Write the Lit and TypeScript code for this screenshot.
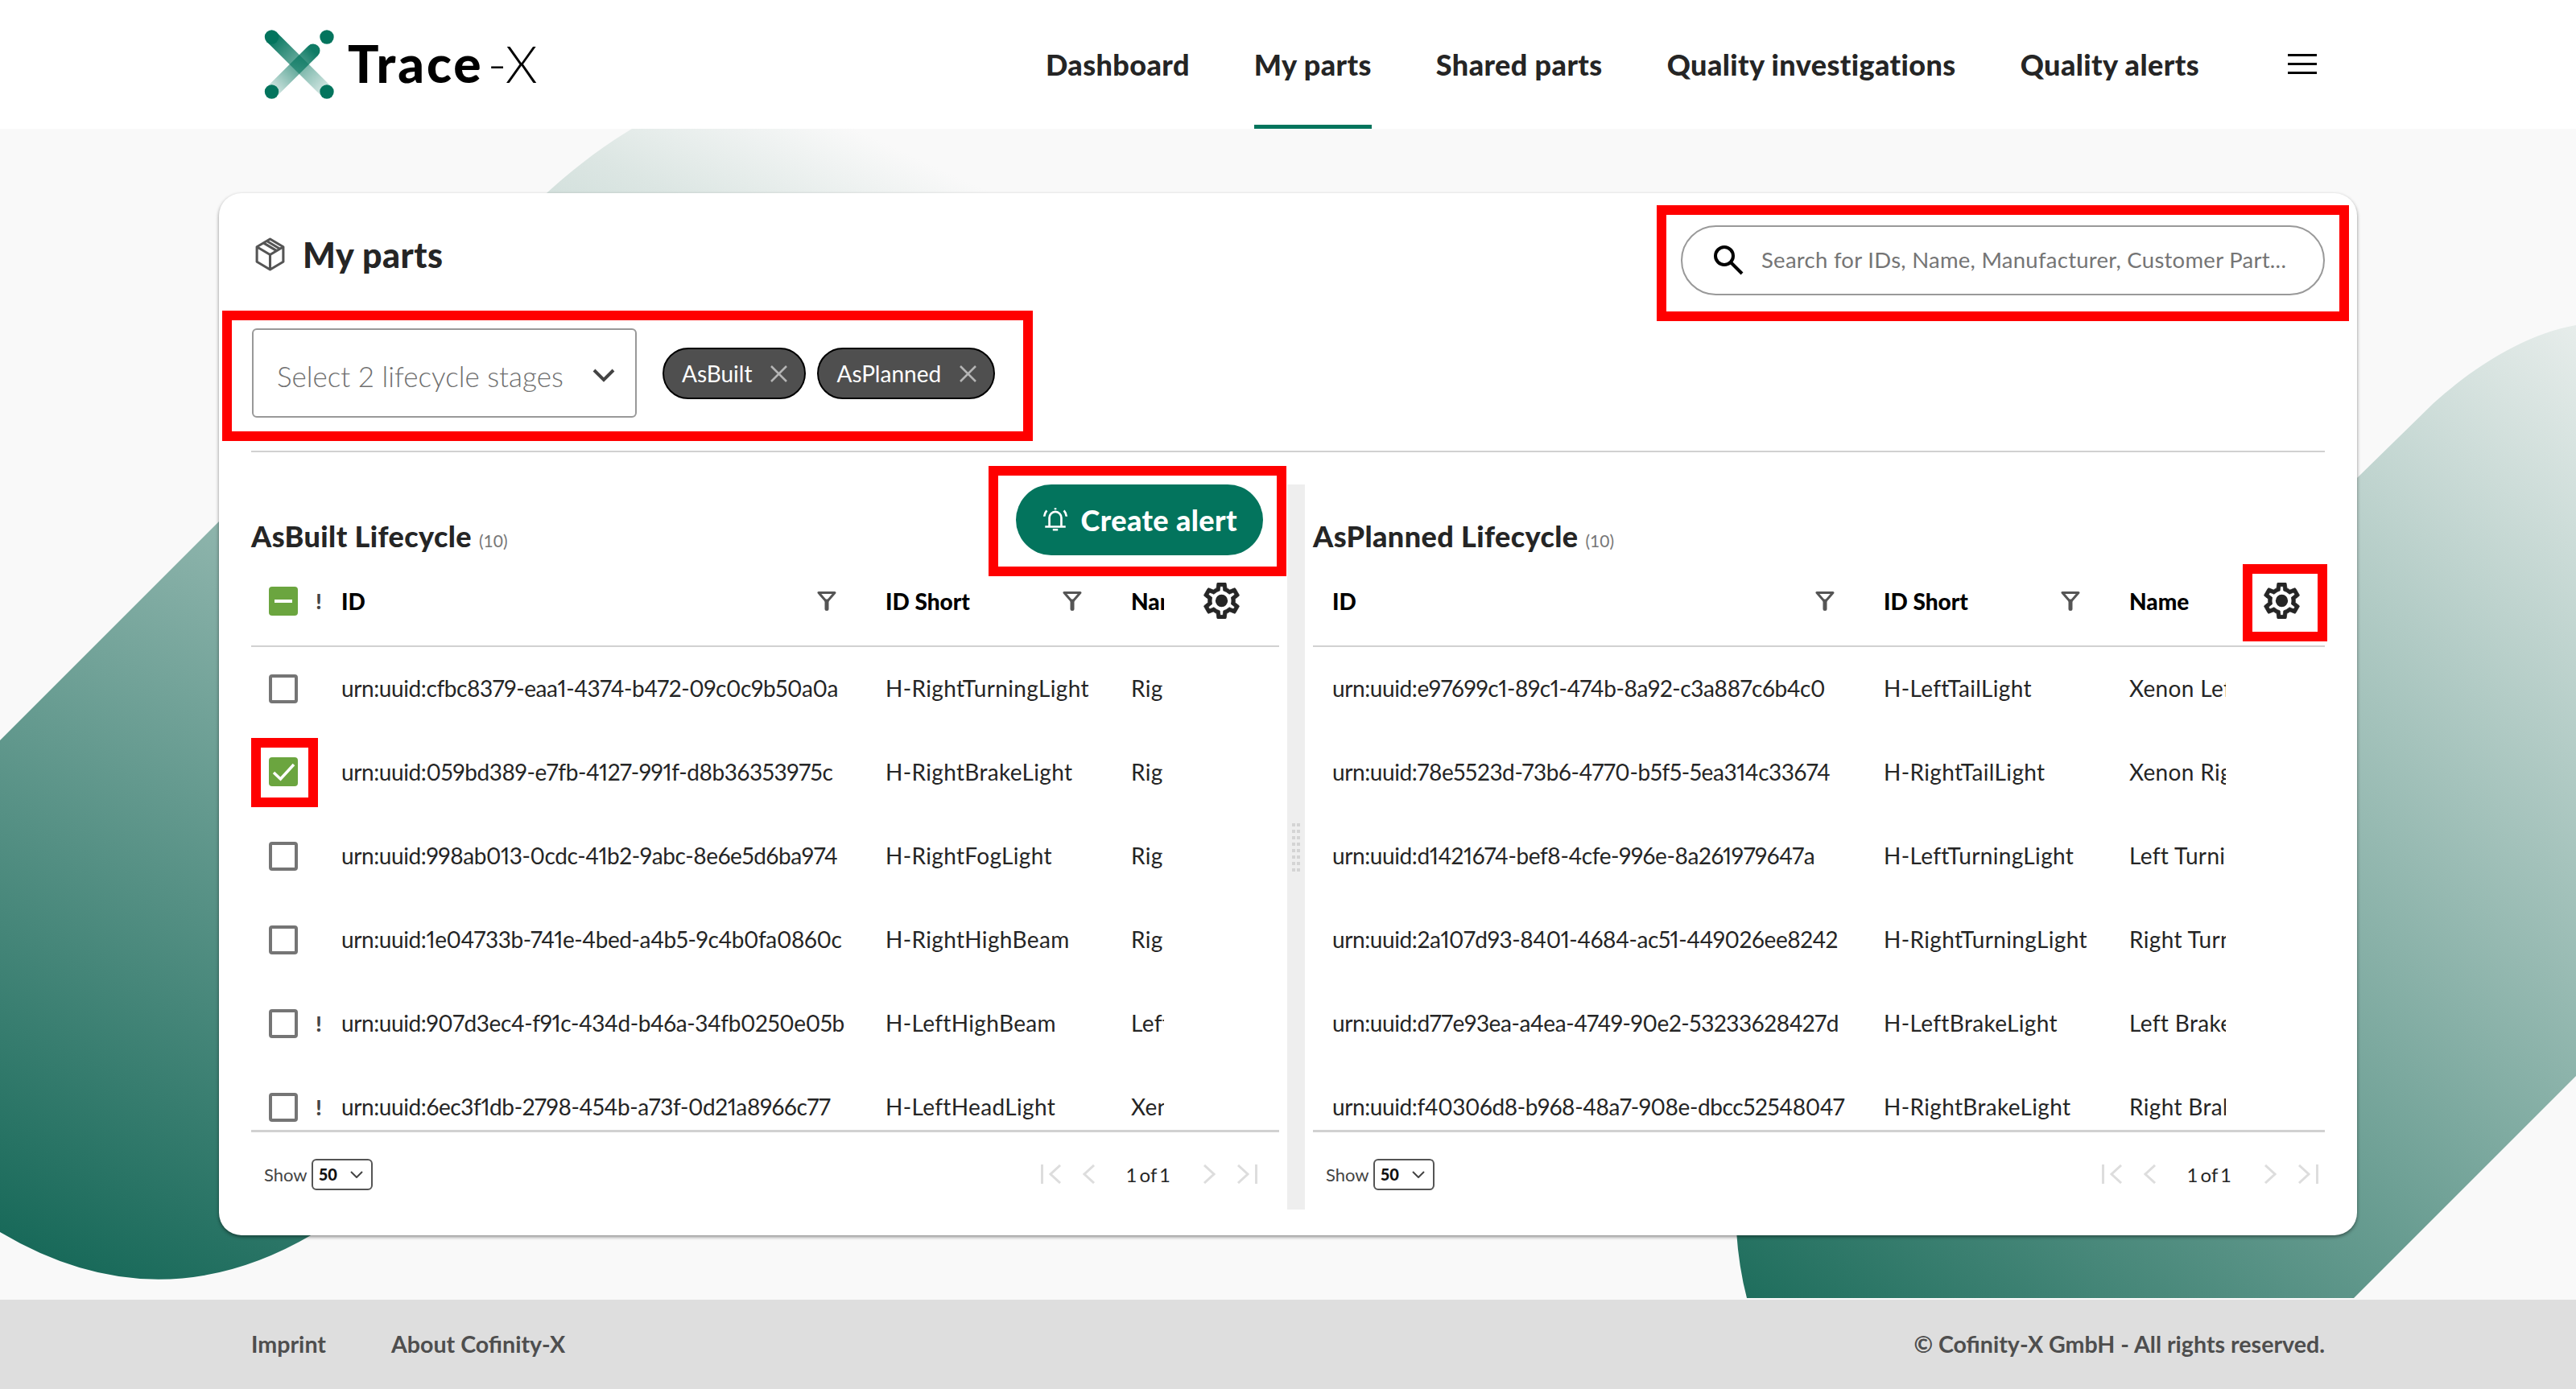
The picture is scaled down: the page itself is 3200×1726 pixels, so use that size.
import { LitElement, css, html, svg } from "lit";
import { customElement } from "lit/decorators.js";

interface Part {
  id: string;
  short: string;
  name: string;
  flag?: boolean;
  checked?: boolean;
}

const asBuilt: Part[] = [
  { id: "urn:uuid:cfbc8379-eaa1-4374-b472-09c0c9b50a0a", short: "H-RightTurningLight", name: "Right Turning Light" },
  { id: "urn:uuid:059bd389-e7fb-4127-991f-d8b36353975c", short: "H-RightBrakeLight", name: "Right Brake Light", checked: true },
  { id: "urn:uuid:998ab013-0cdc-41b2-9abc-8e6e5d6ba974", short: "H-RightFogLight", name: "Right Fog Light" },
  { id: "urn:uuid:1e04733b-741e-4bed-a4b5-9c4b0fa0860c", short: "H-RightHighBeam", name: "Right High Beam" },
  { id: "urn:uuid:907d3ec4-f91c-434d-b46a-34fb0250e05b", short: "H-LeftHighBeam", name: "Left High Beam", flag: true },
  { id: "urn:uuid:6ec3f1db-2798-454b-a73f-0d21a8966c77", short: "H-LeftHeadLight", name: "Xenon Left Head", flag: true },
];

const asPlanned: Part[] = [
  { id: "urn:uuid:e97699c1-89c1-474b-8a92-c3a887c6b4c0", short: "H-LeftTailLight", name: "Xenon Left Tail Light" },
  { id: "urn:uuid:78e5523d-73b6-4770-b5f5-5ea314c33674", short: "H-RightTailLight", name: "Xenon Right Tail Light" },
  { id: "urn:uuid:d1421674-bef8-4cfe-996e-8a261979647a", short: "H-LeftTurningLight", name: "Left Turning Light" },
  { id: "urn:uuid:2a107d93-8401-4684-ac51-449026ee8242", short: "H-RightTurningLight", name: "Right Turning Light" },
  { id: "urn:uuid:d77e93ea-a4ea-4749-90e2-53233628427d", short: "H-LeftBrakeLight", name: "Left Brake Light" },
  { id: "urn:uuid:f40306d8-b968-48a7-908e-dbcc52548047", short: "H-RightBrakeLight", name: "Right Brake Light" },
];

const navItems = ["Dashboard", "My parts", "Shared parts", "Quality investigations", "Quality alerts"];

const gearPath =
  "M19.43 12.98c.04-.32.07-.64.07-.98 0-.34-.03-.66-.07-.98l2.11-1.65c.19-.15.24-.42.12-.64l-2-3.46c-.09-.16-.26-.25-.44-.25-.06 0-.12.01-.17.03l-2.49 1c-.52-.4-1.08-.73-1.69-.98l-.38-2.65C14.46 2.18 14.25 2 14 2h-4c-.25 0-.46.18-.49.42l-.38 2.65c-.61.25-1.17.59-1.69.98l-2.49-1c-.06-.02-.12-.03-.18-.03-.17 0-.34.09-.43.25l-2 3.46c-.13.22-.07.49.12.64l2.11 1.65c-.04.32-.07.65-.07.98 0 .33.03.66.07.98l-2.11 1.65c-.19.15-.24.42-.12.64l2 3.46c.09.16.26.25.44.25.06 0 .12-.01.17-.03l2.49-1c.52.4 1.08.73 1.69.98l.38 2.65c.03.24.24.42.49.42h4c.25 0 .46-.18.49-.42l.38-2.65c.61-.25 1.17-.59 1.69-.98l2.49 1c.06.02.12.03.18.03.17 0 .34-.09.43-.25l2-3.46c.12-.22.07-.49-.12-.64l-2.11-1.65zm-1.98-1.71c.04.31.05.52.05.73 0 .21-.02.43-.05.73l-.14 1.13.89.7 1.08.84-.7 1.21-1.27-.51-1.04-.42-.9.68c-.43.32-.84.56-1.25.73l-1.06.43-.16 1.13-.2 1.35h-1.4l-.19-1.35-.16-1.13-1.06-.43c-.43-.18-.83-.41-1.23-.71l-.91-.7-1.06.43-1.27.51-.7-1.21 1.08-.84.89-.7-.14-1.13c-.03-.31-.05-.54-.05-.74s.02-.43.05-.73l.14-1.13-.89-.7-1.08-.84.7-1.21 1.27.51 1.04.42.9-.68c.43-.32.84-.56 1.25-.73l1.06-.43.16-1.13.2-1.35h1.39l.19 1.35.16 1.13 1.06.43c.43.18.83.41 1.23.71l.91.7 1.06-.43 1.27-.51.7 1.21-1.07.85-.89.7.14 1.13z";

@customElement("app-root")
export class AppRoot extends LitElement {
  static styles = css`
    :host {
      display: flex;
      flex-direction: column;
      position: relative;
      width: 3200px;
      height: 1726px;
      overflow: hidden;
      background: #f9f9f9;
      font-family: Lato, "Noto Sans", sans-serif;
      color: #252525;
    }
    * {
      box-sizing: border-box;
    }
    svg {
      display: block;
      flex: none;
    }
    .backdrop {
      position: absolute;
      left: 0;
      top: 0;
    }
    header {
      position: relative;
      display: flex;
      align-items: stretch;
      height: 160px;
      padding-left: 328px;
      background: #fff;
    }
    .logo {
      display: flex;
      align-items: center;
      gap: 16px;
    }
    .brand {
      font-size: 64px;
      font-weight: 900;
      color: #000;
      letter-spacing: 3px;
      line-height: 1;
      margin-top: -2px;
    }
    .brand span {
      font-weight: 300;
      letter-spacing: 0;
      margin-left: 5px;
    }
    nav {
      display: flex;
      align-items: stretch;
      gap: 80px;
      margin-left: auto;
    }
    nav a {
      display: flex;
      align-items: center;
      font-size: 36px;
      font-weight: 900;
      letter-spacing: 0.4px;
      color: #252525;
      border-bottom: 5px solid transparent;
      border-top: 5px solid transparent;
    }
    nav a.active {
      border-bottom-color: #03745d;
    }
    .burger {
      align-self: center;
      display: flex;
      flex-direction: column;
      gap: 8px;
      margin: 0 322px 2px 110px;
      width: 36px;
    }
    .burger i {
      display: block;
      height: 3px;
      background: #000;
    }
    main {
      position: relative;
      flex: 1;
      padding: 80px 272px 0;
    }
    .card {
      height: 1295px;
      padding: 0 40px;
      background: #fff;
      border-radius: 28px;
      box-shadow: 0 2px 4px rgba(0, 0, 0, 0.45);
    }
    .top {
      display: flex;
      justify-content: space-between;
      height: 322px;
      border-bottom: 2px solid #d1d1d1;
    }
    .title {
      display: flex;
      align-items: center;
      gap: 21px;
      height: 48px;
      margin: 52px 0 46px 4px;
      font-size: 43px;
      font-weight: 900;
      letter-spacing: 0.5px;
      color: #252525;
    }
    .mark {
      border: 12px solid #f00;
    }
    .lifecycle-mark {
      display: flex;
      align-items: flex-start;
      gap: 32px;
      width: 1007px;
      height: 162px;
      margin-left: -36px;
      padding: 10px 0 0 25px;
    }
    .select {
      display: flex;
      align-items: center;
      justify-content: space-between;
      width: 478px;
      height: 111px;
      padding: 6px 25px 0 29px;
      border: 2px solid #999;
      border-radius: 6px;
      font-size: 35px;
      font-weight: 300;
      color: #707070;
    }
    .chips {
      display: flex;
      gap: 14px;
      margin-top: 24px;
    }
    .chip {
      display: flex;
      align-items: center;
      gap: 22px;
      height: 64px;
      padding: 0 20px 0 22px;
      border: 2px solid #000;
      border-radius: 32px;
      background: #4f4f4f;
      color: #fff;
      font-size: 28px;
    }
    .search-mark {
      width: 860px;
      height: 144px;
      margin: 15px -30px 0 0;
      padding: 13px 18px;
    }
    .search {
      display: flex;
      align-items: center;
      gap: 22px;
      height: 87px;
      padding: 0 38px 2px;
      border: 2px solid #999;
      border-radius: 44px;
      font-size: 27.5px;
      font-weight: 400;
      letter-spacing: 0.27px;
      color: #757575;
      white-space: nowrap;
    }
    .panels {
      display: flex;
      height: 901px;
      margin-top: 40px;
    }
    .panel {
      display: flex;
      flex-direction: column;
    }
    .panel.left {
      width: 1287px;
      padding-right: 10px;
    }
    .panel.right {
      flex: 1;
      padding-left: 10px;
    }
    .splitter {
      display: flex;
      align-items: center;
      justify-content: center;
      width: 22px;
      background: #eee;
    }
    .grip {
      display: grid;
      grid-template-columns: 4px 4px;
      gap: 4px 2px;
    }
    .grip i {
      width: 4px;
      height: 4px;
      background: #d4d4d4;
    }
    .panel-head {
      display: flex;
      justify-content: space-between;
      height: 98px;
      flex: none;
    }
    .panel-title {
      margin-top: 40px;
      font-size: 36px;
      line-height: 48px;
      font-weight: 900;
      letter-spacing: 0.4px;
      color: #252525;
    }
    .panel-title small {
      font-size: 21px;
      font-weight: 400;
      letter-spacing: 0;
      color: #777;
    }
    .create-mark {
      flex: none;
      height: 137px;
      margin: -23px -9px 0 0;
      padding: 11px 17px 14px 22px;
    }
    .create {
      display: flex;
      align-items: center;
      gap: 15px;
      height: 88px;
      padding: 0 32px;
      border: 0;
      border-radius: 44px;
      background: #03745d;
      color: #fff;
      font: 900 36px Lato, sans-serif;
      letter-spacing: 0.4px;
    }
    .grid {
      display: grid;
      align-items: center;
      font-size: 28px;
    }
    .left .grid {
      grid-template-columns: 80px 32px 676px 305px 41px 143px;
    }
    .right .grid {
      grid-template-columns: 24px 685px 305px 120px 123px;
    }
    .thead {
      height: 104px;
      grid-template-rows: 93px;
      border-bottom: 2px solid #d1d1d1;
      font-weight: 900;
      color: #000;
      flex: none;
    }
    .th {
      display: flex;
      align-items: center;
      justify-content: space-between;
      padding-right: 61px;
      white-space: nowrap;
    }
    .clip {
      overflow: hidden;
      white-space: nowrap;
      padding: 0;
    }
    .gear-cell {
      align-self: start;
      display: flex;
      justify-content: center;
      padding-top: 24px;
    }
    .right .gear-cell {
      justify-content: flex-start;
      padding-top: 0;
    }
    .gear-mark {
      flex: none;
      height: 96px;
      width: 105px;
      margin: 1px 0 0 21px;
      padding: 11px 22px 16px 14px;
    }
    .tbody {
      height: 600px;
      overflow: hidden;
      flex: none;
    }
    .row {
      height: 104px;
    }
    .cell {
      overflow: hidden;
      white-space: nowrap;
      padding-bottom: 3px;
      letter-spacing: 0.35px;
    }
    .cell.uuid {
      letter-spacing: -0.4px;
      font-variant-numeric: proportional-nums;
      font-feature-settings: "pnum";
    }
    .check {
      display: flex;
      align-items: center;
      justify-content: center;
      width: 36px;
      height: 36px;
      margin-left: 22px;
      border: 4px solid #757575;
      border-radius: 4px;
    }
    .check.on {
      border: 0;
      background: #6ba53f;
    }
    .check-mark {
      width: 83px;
      height: 86px;
      padding: 12px 0 0 10px;
    }
    .check-mark .check {
      margin-left: 0;
    }
    .flag {
      display: flex;
      justify-content: center;
      font-weight: 900;
      font-size: 26px;
      color: #444;
      width: 8px;
    }
    .pager-row {
      display: flex;
      align-items: center;
      justify-content: space-between;
      flex: 1;
      padding: 8px 8px 0 16px;
      border-top: 3px solid #d1d1d1;
    }
    .left .pager-row {
      padding-right: 27px;
    }
    .show {
      display: flex;
      align-items: center;
      gap: 5px;
      font-size: 22px;
      color: #444;
    }
    .size {
      display: flex;
      align-items: center;
      justify-content: space-between;
      width: 76px;
      height: 39px;
      padding: 0 10px 0 7px;
      border: 2px solid #555;
      border-radius: 6px;
      font-size: 20px;
      font-weight: 900;
      color: #111;
    }
    .pager {
      display: flex;
      align-items: center;
      font-size: 24px;
      color: #252525;
    }
    .count {
      margin: 0 40px 0 38px;
      word-spacing: -3px;
    }
    .pager svg + svg {
      margin-left: 26px;
    }
    footer {
      position: relative;
      display: flex;
      align-items: center;
      gap: 81px;
      height: 111px;
      padding: 0 312px 2px;
      background: #dedede;
      font-size: 28.6px;
      font-weight: 700;
      color: #4e4e4e;
    }
    footer .copy {
      margin-left: auto;
    }
  `;

  private backdrop() {
    return html`
      <svg class="backdrop" width="3200" height="1726" viewBox="0 0 3200 1726">
        <defs>
          <linearGradient id="bgl" gradientUnits="userSpaceOnUse" x1="0" y1="1530" x2="715" y2="-2">
            <stop offset="0" stop-color="#196a5a" />
            <stop offset="0.9" stop-color="#dce6e3" />
            <stop offset="1" stop-color="#f9f9f9" />
          </linearGradient>
          <linearGradient id="bgr" gradientUnits="userSpaceOnUse" x1="2170" y1="1613" x2="3200" y2="400">
            <stop offset="0" stop-color="#1f6e5d" />
            <stop offset="1" stop-color="#e7edeb" />
          </linearGradient>
        </defs>
        <path fill="url(#bgl)" d="M0 920L600 320C650 265 710 205 785 160L1300 160L1300 1000L388 1534Q195 1647 0 1531Z" />
        <path fill="url(#bgr)" d="M2500 1000L2929 593L3023 501C3080 450 3140 415 3200 404L3200 1337L2924 1613L2170 1613Q2160 1575 2157 1530Z" />
      </svg>
    `;
  }

  private logoMark() {
    return html`
      <svg width="88" height="86" viewBox="0 0 88 86">
        <defs>
          <linearGradient id="a1" gradientUnits="userSpaceOnUse" x1="9" y1="9" x2="78" y2="77">
            <stop offset="0" stop-color="#03745d" />
            <stop offset="1" stop-color="#03745d" stop-opacity="0.15" />
          </linearGradient>
          <linearGradient id="a2" gradientUnits="userSpaceOnUse" x1="61" y1="26" x2="9" y2="77">
            <stop offset="0" stop-color="#03745d" stop-opacity="0.95" />
            <stop offset="1" stop-color="#03745d" stop-opacity="0.15" />
          </linearGradient>
        </defs>
        <path d="M9.5 9L78 77" stroke="url(#a1)" stroke-width="17" />
        <path d="M9.5 77L61 26" stroke="url(#a2)" stroke-width="17" stroke-linecap="round" />
        <circle cx="9.5" cy="9" r="8.7" fill="#03745d" />
        <circle cx="78" cy="9" r="8.7" fill="#03745d" />
        <circle cx="9.5" cy="77" r="8.7" fill="#03745d" />
        <circle cx="78" cy="77" r="8.7" fill="#03745d" />
      </svg>
    `;
  }

  private filterIcon() {
    return html`
      <svg width="24" height="25" viewBox="0 0 24 25">
        <path d="M2 2.5h20L12 14z" fill="none" stroke="#555" stroke-width="3" stroke-linejoin="round" />
        <path d="M12 13V22.5" stroke="#555" stroke-width="5" stroke-linecap="round" />
      </svg>
    `;
  }

  private gearIcon() {
    return html`
      <svg width="45" height="45" viewBox="2 2 20 20">
        <path d=${gearPath} fill="#252525" stroke="#252525" stroke-width="0.35" />
        <circle cx="12" cy="12" r="3.4" fill="#252525" />
      </svg>
    `;
  }

  private closeIcon() {
    return html`
      <svg width="23" height="23" viewBox="0 0 23 23">
        <path d="M2 2L21 21M21 2L2 21" stroke="#b5b5b5" stroke-width="2.5" />
      </svg>
    `;
  }

  private checkmark() {
    return html`
      <svg width="36" height="36" viewBox="0 0 36 36">
        <path d="M6 19L14.5 27L31 9" fill="none" stroke="#fff" stroke-width="3.5" />
      </svg>
    `;
  }

  private pagerIcon(kind: "first" | "prev" | "next" | "last") {
    const flip = kind === "next" || kind === "last";
    const bar = kind === "first" || kind === "last";
    const w = bar ? 26 : 16;
    return html`
      <svg width=${w} height="24" viewBox="0 0 ${w} 24" style=${flip ? "transform:scaleX(-1)" : ""}>
        ${bar ? svg`<path d="M1.5 0V24" stroke="#ddd" stroke-width="3" />` : ""}
        <path d=${bar ? "M24 1L12 12L24 23" : "M14 1L2 12L14 23"} fill="none" stroke="#ddd" stroke-width="3" />
      </svg>
    `;
  }

  private tableHead(side: "left" | "right") {
    const gear = this.gearIcon();
    return html`
      <div class="grid thead">
        ${side === "left"
          ? html`
              <div>
                <div class="check on">
                  <svg width="22" height="4" viewBox="0 0 22 4"><rect width="22" height="4" fill="#fff" /></svg>
                </div>
              </div>
              <div class="flag">!</div>
            `
          : html`<div></div>`}
        <div class="th">ID ${this.filterIcon()}</div>
        <div class="th">ID Short ${this.filterIcon()}</div>
        <div class="th clip">Name</div>
        ${side === "left"
          ? html`<div class="gear-cell">${gear}</div>`
          : html`<div class="gear-cell"><div class="mark gear-mark">${gear}</div></div>`}
      </div>
    `;
  }

  private tableRow(part: Part, side: "left" | "right") {
    return html`
      <div class="grid row">
        ${side === "left"
          ? html`
              <div>
                ${part.checked
                  ? html`<div class="mark check-mark"><div class="check on">${this.checkmark()}</div></div>`
                  : html`<div class="check"></div>`}
              </div>
              <div class="flag">${part.flag ? "!" : ""}</div>
            `
          : html`<div></div>`}
        <div class="cell uuid">${part.id}</div>
        <div class="cell">${part.short}</div>
        <div class="cell">${part.name}</div>
        <div></div>
      </div>
    `;
  }

  private pagerRow() {
    return html`
      <div class="pager-row">
        <div class="show">
          Show
          <div class="size">
            50
            <svg width="16" height="9" viewBox="0 0 16 9">
              <path d="M1 1L8 8L15 1" fill="none" stroke="#444" stroke-width="2" />
            </svg>
          </div>
        </div>
        <div class="pager">
          ${this.pagerIcon("first")} ${this.pagerIcon("prev")}
          <span class="count">1 of 1</span>
          ${this.pagerIcon("next")} ${this.pagerIcon("last")}
        </div>
      </div>
    `;
  }

  render() {
    return html`
      ${this.backdrop()}
      <header>
        <div class="logo">
          ${this.logoMark()}
          <div class="brand">Trace<span>-X</span></div>
        </div>
        <nav>
          ${navItems.map((item) => html`<a class=${item === "My parts" ? "active" : ""}>${item}</a>`)}
        </nav>
        <div class="burger"><i></i><i></i><i></i></div>
      </header>

      <main>
        <div class="card">
          <div class="top">
            <div>
              <div class="title">
                <svg width="39" height="42" viewBox="0 0 38 41">
                  <path
                    d="M19 2L35 11.5V29.5L19 39L3 29.5V11.5ZM3 11.5L19 21L35 11.5M19 21V39M11 6.7L27 16.2M15 4.4L31 13.9"
                    fill="none"
                    stroke="#555"
                    stroke-width="3"
                    stroke-linejoin="round"
                  />
                </svg>
                My parts
              </div>
              <div class="mark lifecycle-mark">
                <div class="select">
                  Select 2 lifecycle stages
                  <svg width="28" height="17" viewBox="0 0 28 17">
                    <path d="M2 2L14 14L26 2" fill="none" stroke="#444" stroke-width="4" />
                  </svg>
                </div>
                <div class="chips">
                  <div class="chip">AsBuilt ${this.closeIcon()}</div>
                  <div class="chip">AsPlanned ${this.closeIcon()}</div>
                </div>
              </div>
            </div>
            <div class="mark search-mark">
              <div class="search">
                <svg width="38" height="38" viewBox="0 0 38 38">
                  <circle cx="14" cy="14" r="11" fill="none" stroke="#000" stroke-width="4" />
                  <path d="M22 22L36 36" stroke="#000" stroke-width="4" />
                </svg>
                Search for IDs, Name, Manufacturer, Customer Part...
              </div>
            </div>
          </div>

          <div class="panels">
            <div class="panel left">
              <div class="panel-head">
                <div class="panel-title">AsBuilt Lifecycle <small>(10)</small></div>
                <div class="mark create-mark">
                  <button class="create">
                    <svg width="34" height="34" viewBox="0 0 32 32" fill="none" stroke="#fff" stroke-width="2.5">
                      <path d="M9 23V13.5a7 7 0 0 1 14 0V23M4 24h24M13 27.5h6" />
                      <path d="M6 5a12 12 0 0 0-3 7M26 5a12 12 0 0 1 3 7M16 2v2" />
                    </svg>
                    Create alert
                  </button>
                </div>
              </div>
              ${this.tableHead("left")}
              <div class="tbody">${asBuilt.map((p) => this.tableRow(p, "left"))}</div>
              ${this.pagerRow()}
            </div>

            <div class="splitter">
              <div class="grip">${Array.from({ length: 16 }, () => html`<i></i>`)}</div>
            </div>

            <div class="panel right">
              <div class="panel-head">
                <div class="panel-title">AsPlanned Lifecycle <small>(10)</small></div>
              </div>
              ${this.tableHead("right")}
              <div class="tbody">${asPlanned.map((p) => this.tableRow(p, "right"))}</div>
              ${this.pagerRow()}
            </div>
          </div>
        </div>
      </main>

      <footer>
        <span>Imprint</span>
        <span>About Cofinity-X</span>
        <span class="copy">© Cofinity-X GmbH - All rights reserved.</span>
      </footer>
    `;
  }
}
